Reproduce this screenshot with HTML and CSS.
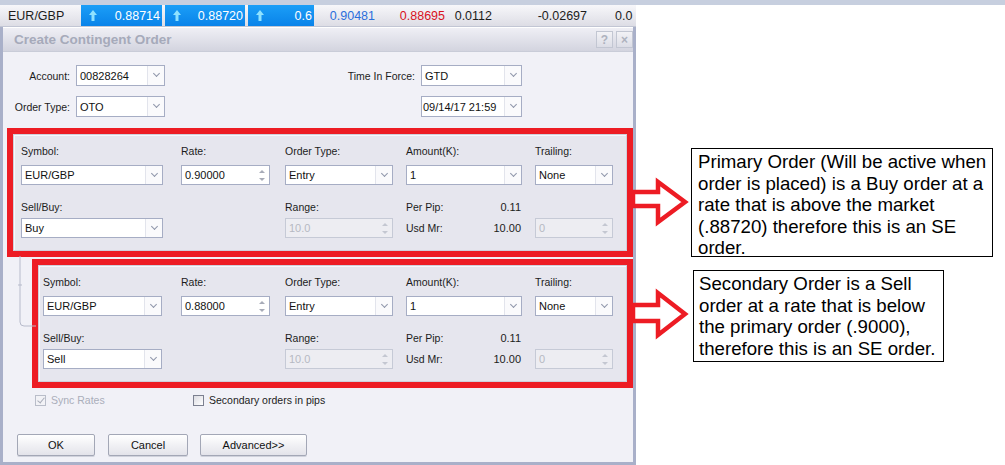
FILE: index.html
```html
<!DOCTYPE html>
<html lang="en">
<head>
    <meta charset="UTF-8">
    <meta name="viewport" content="width=device-width, initial-scale=1.0">
    <title>Create Contingent Order</title>
    <link rel="stylesheet" href="styles.css">
</head>
<body>
    <div class="top-strip"></div>

    <div class="screen">
        <div class="app">
            <div class="quote-row">
                <div class="q-cell q-symbol">EUR/GBP</div>
                <div class="q-cell q-up q-bid">
                    <svg class="up-arrow" width="8" height="11" viewBox="0 0 8 11"><path d="M4 0 L8 5 H5.5 V11 H2.5 V5 H0 Z"/></svg>
                    <span>0.88714</span>
                </div>
                <div class="q-cell q-up q-ask">
                    <svg class="up-arrow" width="8" height="11" viewBox="0 0 8 11"><path d="M4 0 L8 5 H5.5 V11 H2.5 V5 H0 Z"/></svg>
                    <span>0.88720</span>
                </div>
                <div class="q-cell q-up q-spread">
                    <svg class="up-arrow" width="8" height="11" viewBox="0 0 8 11"><path d="M4 0 L8 5 H5.5 V11 H2.5 V5 H0 Z"/></svg>
                    <span>0.6</span>
                </div>
                <div class="q-cell q-high">0.90481</div>
                <div class="q-cell q-low">0.88695</div>
                <div class="q-cell q-change">0.0112</div>
                <div class="q-cell q-pct">-0.02697</div>
                <div class="q-cell q-last">0.0</div>
            </div>

            <div class="dialog">
                <div class="titlebar">
                    <span class="title">Create Contingent Order</span>
                    <div class="title-buttons">
                        <span class="tbtn">?</span>
                        <span class="tbtn">&times;</span>
                    </div>
                </div>

                <div class="dialog-body">
                    <svg class="tree-line" width="24" height="80" viewBox="0 0 24 80">
                        <path d="M6 4 V70 Q6 74 10 74 H22"/>
                        <path d="M4 33 H8"/>
                    </svg>

                    <div class="header-fields">
                        <span class="hlabel">Account:</span>
                        <div class="select select-lg"><span>00828264</span><i class="dd"></i></div>
                        <span class="hlabel">Time In Force:</span>
                        <div class="select select-lg"><span>GTD</span><i class="dd"></i></div>

                        <span class="hlabel">Order Type:</span>
                        <div class="select select-lg"><span>OTO</span><i class="dd"></i></div>
                        <span></span>
                        <div class="select select-lg"><span class="tight">09/14/17 21:59</span><i class="dd"></i></div>
                    </div>

                    <!-- primary order -->
                    <div class="mark mark-primary">
                        <div class="panel panel-primary">
                            <div class="row">
                                <div class="field col-1">
                                    <label>Symbol:</label>
                                    <div class="select w-symbol"><span>EUR/GBP</span><i class="dd"></i></div>
                                </div>
                                <div class="field col-2">
                                    <label>Rate:</label>
                                    <div class="spin w-rate"><span>0.90000</span><i class="spin-btns"><b class="s-up"></b><b class="s-down"></b></i></div>
                                </div>
                                <div class="field col-3">
                                    <label>Order Type:</label>
                                    <div class="select w-otype"><span>Entry</span><i class="dd"></i></div>
                                </div>
                                <div class="field col-4">
                                    <label>Amount(K):</label>
                                    <div class="select w-amount"><span>1</span><i class="dd"></i></div>
                                </div>
                                <div class="field col-5">
                                    <label>Trailing:</label>
                                    <div class="select w-trail"><span>None</span><i class="dd"></i></div>
                                </div>
                            </div>
                            <div class="row row-2">
                                <div class="field col-1">
                                    <label>Sell/Buy:</label>
                                    <div class="select w-symbol"><span>Buy</span><i class="dd"></i></div>
                                </div>
                                <div class="field col-2"></div>
                                <div class="field col-3">
                                    <label>Range:</label>
                                    <div class="spin disabled w-otype"><span>10.0</span><i class="spin-btns"><b class="s-up"></b><b class="s-down"></b></i></div>
                                </div>
                                <div class="field col-4 pip-info">
                                    <div class="pip-line"><span>Per Pip:</span><span>0.11</span></div>
                                    <div class="pip-line pip-line-lg"><span>Usd Mr:</span><span>10.00</span></div>
                                </div>
                                <div class="field col-5">
                                    <label>&nbsp;</label>
                                    <div class="spin disabled w-trail"><span>0</span><i class="spin-btns"><b class="s-up"></b><b class="s-down"></b></i></div>
                                </div>
                            </div>
                        </div>
                    </div>

                    <!-- secondary order -->
                    <div class="mark mark-secondary">
                        <div class="panel panel-secondary">
                            <div class="row">
                                <div class="field col-1">
                                    <label>Symbol:</label>
                                    <div class="select w-symbol"><span>EUR/GBP</span><i class="dd"></i></div>
                                </div>
                                <div class="field col-2">
                                    <label>Rate:</label>
                                    <div class="spin w-rate"><span>0.88000</span><i class="spin-btns"><b class="s-up"></b><b class="s-down"></b></i></div>
                                </div>
                                <div class="field col-3">
                                    <label>Order Type:</label>
                                    <div class="select w-otype"><span>Entry</span><i class="dd"></i></div>
                                </div>
                                <div class="field col-4">
                                    <label>Amount(K):</label>
                                    <div class="select w-amount"><span>1</span><i class="dd"></i></div>
                                </div>
                                <div class="field col-5">
                                    <label>Trailing:</label>
                                    <div class="select w-trail"><span>None</span><i class="dd"></i></div>
                                </div>
                            </div>
                            <div class="row row-2">
                                <div class="field col-1">
                                    <label>Sell/Buy:</label>
                                    <div class="select w-symbol"><span>Sell</span><i class="dd"></i></div>
                                </div>
                                <div class="field col-2"></div>
                                <div class="field col-3">
                                    <label>Range:</label>
                                    <div class="spin disabled w-otype"><span>10.0</span><i class="spin-btns"><b class="s-up"></b><b class="s-down"></b></i></div>
                                </div>
                                <div class="field col-4 pip-info">
                                    <div class="pip-line"><span>Per Pip:</span><span>0.11</span></div>
                                    <div class="pip-line pip-line-lg"><span>Usd Mr:</span><span>10.00</span></div>
                                </div>
                                <div class="field col-5">
                                    <label>&nbsp;</label>
                                    <div class="spin disabled w-trail"><span>0</span><i class="spin-btns"><b class="s-up"></b><b class="s-down"></b></i></div>
                                </div>
                            </div>
                        </div>
                    </div>

                    <div class="checks">
                        <div class="check check-sync disabled"><span class="box checked"></span>Sync Rates</div>
                        <div class="check"><span class="box"></span>Secondary orders in pips</div>
                    </div>

                    <div class="buttons">
                        <button class="btn btn-ok">OK</button>
                        <button class="btn btn-cancel">Cancel</button>
                        <button class="btn btn-adv">Advanced&gt;&gt;</button>
                    </div>
                </div>
            </div>
        </div>

        <div class="notes">
            <div class="callout callout-primary">Primary Order (Will be active when<br>order is placed) is a Buy order at a<br>rate that is above the market<br>(.88720) therefore this is an SE<br>order.</div>
            <div class="callout callout-secondary">Secondary Order is a Sell<br>order at a rate that is below<br>the primary order (.9000),<br>therefore this is an SE order.</div>
        </div>

        <svg class="arrows" width="64" height="170" viewBox="628 175 64 170">
            <polygon points="633,192 658,192 658,182 685,202 658,222 658,206 633,206"/>
            <polygon points="633,305 658,305 658,293 685,314 658,335 658,321 633,321"/>
        </svg>
    </div>
</body>
</html>
```

FILE: styles.css
```css
* {
    margin: 0;
    padding: 0;
    box-sizing: border-box;
}

:root {
    --mark-red: #ed1c24;
    --frame: #a9b0c9;
    --body-bg: #f1f1f7;
    --panel-bg: #e6e6ee;
    --field-border: #a6adc4;
    --text: #1c1c1c;
}

body {
    background: #ffffff;
    font-family: 'Liberation Sans', Arial, sans-serif;
    color: var(--text);
    width: 1005px;
    height: 465px;
    overflow: hidden;
}

.top-strip {
    height: 5px;
    background: #c7cfdf;
}

.screen {
    display: flex;
    position: relative;
    height: 460px;
}

.app {
    width: 636px;
    flex-shrink: 0;
    overflow: hidden;
}

/* Quote row */
.quote-row {
    display: flex;
    height: 22px;
    background: linear-gradient(#f7f7fa, #dddde5);
    border-bottom: 1px solid #c2c6d4;
    font-size: 12.5px;
    white-space: nowrap;
    overflow: hidden;
}

.q-cell {
    display: flex;
    align-items: center;
    justify-content: flex-end;
    padding-right: 2px;
    flex-shrink: 0;
}

.q-symbol {
    width: 81px;
    justify-content: flex-start;
    padding-left: 8px;
}

.q-up {
    background: linear-gradient(#1b9ef7, #0983e9);
    color: #ffffff;
    justify-content: space-between;
    padding-left: 8px;
}

.up-arrow path {
    fill: #8fe2ff;
}

.q-bid { width: 81px; }
.q-ask { width: 80px; margin-left: 3px; }
.q-spread { width: 66px; margin-left: 3px; }
.q-high { width: 63px; color: #2b6fdc; }
.q-low { width: 70px; color: #d9121d; }
.q-change { width: 47px; }
.q-pct { width: 95px; }
.q-last {
    width: 46px;
    justify-content: flex-start;
    padding-left: 26px;
}

/* Dialog frame */
.dialog {
    border: 3px solid var(--frame);
    border-top: none;
    background: var(--body-bg);
}

.titlebar {
    height: 25px;
    display: flex;
    align-items: center;
    justify-content: space-between;
    background: linear-gradient(#efeff5, #d3d4df);
    border-top: 1px solid #ffffff;
    border-bottom: 1px solid #c9ccd8;
    padding: 0 0 0 11px;
}

.title {
    font-size: 13.5px;
    font-weight: bold;
    color: #a6aaba;
}

.title-buttons {
    display: flex;
    gap: 3px;
}

.tbtn {
    width: 17px;
    height: 17px;
    display: flex;
    align-items: center;
    justify-content: center;
    border: 1px solid #c2c6d2;
    background: linear-gradient(#f2f2f6, #dcdde6);
    color: #aeb2be;
    font-size: 12px;
    font-weight: bold;
}

.dialog-body {
    position: relative;
    height: 410px;
}

.tree-line {
    position: absolute;
    left: 11px;
    top: 200px;
}

.tree-line path {
    fill: none;
    stroke: #b7bbcb;
    stroke-width: 1;
}

/* Top fields */
.header-fields {
    display: grid;
    grid-template-columns: 67px 89px 244px 101px;
    grid-template-rows: 21px 21px;
    column-gap: 6px;
    row-gap: 10px;
    padding-top: 13px;
    align-items: center;
}

.hlabel {
    font-size: 10.5px;
    text-align: right;
}

/* Controls */
.select,
.spin {
    display: flex;
    align-items: center;
    height: 20px;
    background: #ffffff;
    border: 1px solid var(--field-border);
    font-size: 11px;
    color: #111111;
}

.select-lg {
    height: 21px;
}

.select span,
.spin span {
    flex: 1;
    padding-left: 3px;
    white-space: nowrap;
    overflow: hidden;
}

.select span.tight {
    padding-left: 1px;
}

.dd {
    width: 17px;
    height: 100%;
    border-left: 1px solid #e2e4ec;
    background: #fafafc;
    display: flex;
    align-items: center;
    justify-content: center;
}

.dd::after {
    content: '';
    width: 4px;
    height: 4px;
    border-right: 1.5px solid #8f96aa;
    border-bottom: 1.5px solid #8f96aa;
    transform: translateY(-2px) rotate(45deg);
}

.spin-btns {
    width: 14px;
    height: 100%;
    display: flex;
    flex-direction: column;
    align-items: center;
    justify-content: center;
    gap: 5px;
}

.spin-btns b {
    width: 0;
    height: 0;
    border-left: 3px solid transparent;
    border-right: 3px solid transparent;
}

.s-up { border-bottom: 3px solid #a7abb8; }
.s-down { border-top: 3px solid #a7abb8; }

.spin.disabled {
    background: #ededf2;
    border-color: #c6cad6;
    color: #b6b9c3;
}

.spin.disabled .s-up { border-bottom-color: #c4c7d1; }
.spin.disabled .s-down { border-top-color: #c4c7d1; }

/* Red annotation boxes */
.mark {
    border: 6px solid var(--mark-red);
    height: 129px;
}

.mark-primary {
    width: 626px;
    margin: 11px 0 0 4px;
}

.mark-secondary {
    width: 601px;
    margin: 2px 0 0 29px;
}

.panel {
    height: 117px;
    background: var(--panel-bg);
    border: 1px solid #cfd0db;
    box-shadow: inset 1px 1px 0 #f7f7fb;
    padding: 9px 0 12px 7px;
}

.panel-secondary {
    padding-left: 4px;
}

.row {
    display: flex;
}

.row + .row {
    margin-top: 15px;
}

.field {
    display: flex;
    flex-direction: column;
    gap: 7px;
    flex-shrink: 0;
}

.row-2 .field {
    gap: 4px;
}

.field label {
    font-size: 10.5px;
    line-height: 14px;
    height: 14px;
}

.col-1 { width: 160px; }
.panel-secondary .col-1 { width: 138px; }
.col-2 { width: 104px; }
.col-3 { width: 121px; }
.col-4 { width: 129px; }
.col-5 { width: 78px; }

.w-symbol { width: 142px; }
.panel-secondary .w-symbol { width: 119px; }
.w-rate { width: 89px; }
.w-otype { width: 108px; }
.w-amount { width: 116px; }
.w-trail { width: 78px; }

.pip-info {
    width: 129px;
}

.pip-line {
    width: 115px;
    display: flex;
    justify-content: space-between;
    font-size: 10.5px;
    line-height: 14px;
    height: 14px;
}

.pip-line span:last-child {
    font-size: 11px;
}

.pip-line-lg {
    line-height: 20px;
    height: 20px;
}

/* Checkboxes */
.checks {
    display: flex;
    align-items: center;
    height: 24px;
    padding-left: 32px;
    font-size: 10.5px;
}

.check {
    display: flex;
    align-items: center;
    gap: 5px;
}

.check-sync {
    width: 158px;
}

.check.disabled {
    color: #aaaeba;
}

.box {
    width: 11px;
    height: 11px;
    border: 1px solid #7c8090;
    background: linear-gradient(135deg, #dcdce2, #ffffff);
    position: relative;
}

.check.disabled .box {
    border-color: #b9bdc9;
    background: #f2f2f6;
}

.box.checked::after {
    content: '';
    position: absolute;
    left: 3px;
    top: 0;
    width: 3px;
    height: 6px;
    border-right: 1.5px solid #a9adb9;
    border-bottom: 1.5px solid #a9adb9;
    transform: rotate(40deg);
}

/* Buttons */
.buttons {
    display: flex;
    margin: 22px 0 0 14px;
}

.btn {
    height: 22px;
    font-family: inherit;
    font-size: 11px;
    color: #111111;
    border: 1px solid #a3a7b6;
    border-radius: 2px;
    background: linear-gradient(#ffffff, #e3e3ea);
    box-shadow: 0 1px 0 #d0d2dc;
}

.btn-ok { width: 78px; }
.btn-cancel { width: 80px; margin-left: 13px; }
.btn-adv { width: 107px; margin-left: 12px; }

/* Annotations */
.notes {
    flex: 1;
    position: relative;
}

.callout {
    position: absolute;
    border: 1px solid #000000;
    background: #ffffff;
    font-size: 18.67px;
    line-height: 21.5px;
    color: #000000;
    white-space: nowrap;
    padding: 2px 5px 0 6px;
}

.callout-primary {
    left: 55px;
    top: 143px;
    width: 302px;
    height: 109px;
}

.callout-secondary {
    left: 57px;
    top: 265px;
    width: 251px;
    height: 92px;
    padding-left: 5px;
}

.arrows {
    position: absolute;
    left: 628px;
    top: 170px;
}

.arrows polygon {
    fill: #ffffff;
    stroke: var(--mark-red);
    stroke-width: 4.5;
    stroke-linejoin: miter;
}
```
